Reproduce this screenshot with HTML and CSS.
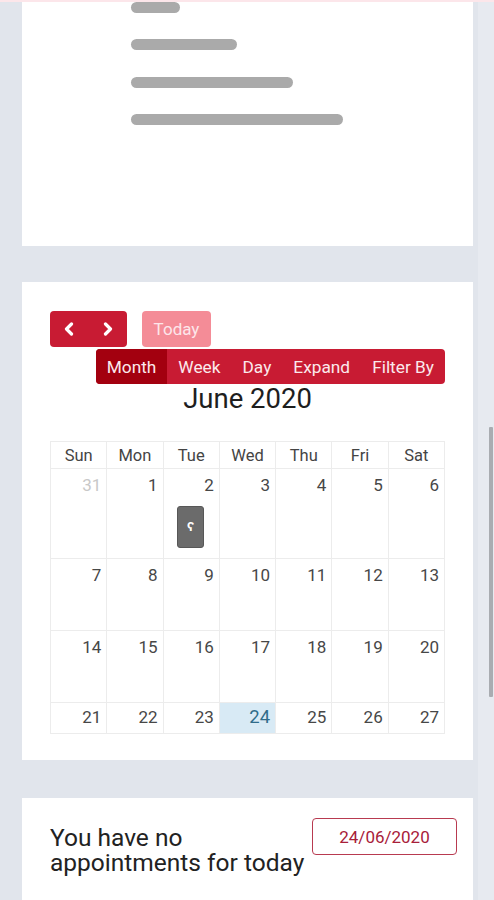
FILE: index.html
```html
<!DOCTYPE html>
<html lang="en">
<head>
<meta charset="utf-8">
<title>Calendar</title>
<link rel="stylesheet" href="styles.css">
</head>
<body>
<div class="topline"></div>
<div class="page">
  <section class="card card-top">
    <div class="skeleton">
      <span class="bar b1"></span>
      <span class="bar b2"></span>
      <span class="bar b3"></span>
      <span class="bar b4"></span>
    </div>
  </section>

  <section class="card card-cal">
    <div class="toolbar-row">
      <div class="btn-group nav-group">
        <button class="btn nav-btn" aria-label="prev">
          <svg width="10" height="14" viewBox="0 0 10 14"><polyline points="7.5,2 2.5,7 7.5,12" fill="none" stroke="#fff" stroke-width="3.2" stroke-linecap="round" stroke-linejoin="round"/></svg>
        </button>
        <button class="btn nav-btn" aria-label="next">
          <svg width="10" height="14" viewBox="0 0 10 14"><polyline points="2.5,2 7.5,7 2.5,12" fill="none" stroke="#fff" stroke-width="3.2" stroke-linecap="round" stroke-linejoin="round"/></svg>
        </button>
      </div>
      <button class="btn today-btn">Today</button>
    </div>
    <div class="view-row">
      <div class="btn-group view-group">
        <button class="btn view-btn active">Month</button>
        <button class="btn view-btn">Week</button>
        <button class="btn view-btn">Day</button>
        <button class="btn view-btn">Expand</button>
        <button class="btn view-btn">Filter By</button>
      </div>
    </div>
    <h2 class="cal-title">June 2020</h2>
    <table class="cal">
      <thead>
        <tr><th>Sun</th><th>Mon</th><th>Tue</th><th>Wed</th><th>Thu</th><th>Fri</th><th>Sat</th></tr>
      </thead>
      <tbody>
        <tr class="r1">
          <td><div class="num other">31</div></td>
          <td><div class="num">1</div></td>
          <td><div class="num">2</div><div class="event">ʕ</div></td>
          <td><div class="num">3</div></td>
          <td><div class="num">4</div></td>
          <td><div class="num">5</div></td>
          <td><div class="num">6</div></td>
        </tr>
        <tr class="r2">
          <td><div class="num">7</div></td>
          <td><div class="num">8</div></td>
          <td><div class="num">9</div></td>
          <td><div class="num">10</div></td>
          <td><div class="num">11</div></td>
          <td><div class="num">12</div></td>
          <td><div class="num">13</div></td>
        </tr>
        <tr class="r2">
          <td><div class="num">14</div></td>
          <td><div class="num">15</div></td>
          <td><div class="num">16</div></td>
          <td><div class="num">17</div></td>
          <td><div class="num">18</div></td>
          <td><div class="num">19</div></td>
          <td><div class="num">20</div></td>
        </tr>
        <tr class="r4">
          <td><div class="num">21</div></td>
          <td><div class="num">22</div></td>
          <td><div class="num">23</div></td>
          <td class="today"><div class="num">24</div></td>
          <td><div class="num">25</div></td>
          <td><div class="num">26</div></td>
          <td><div class="num">27</div></td>
        </tr>
      </tbody>
    </table>
  </section>

  <section class="card card-appt">
    <p class="appt-text">You have no appointments for today</p>
    <button class="date-btn">24/06/2020</button>
  </section>
</div>
<div class="scrollbar"><div class="thumb"></div></div>
</body>
</html>
```
FILE: styles.css
```css
* { box-sizing: border-box; }

html, body {
  margin: 0;
  padding: 0;
}

body {
  background: #e1e5ec;
  font-family: Roboto, "Liberation Sans", sans-serif;
  color: #222;
  height: 900px;
  overflow: hidden;
}

.topline {
  position: absolute;
  left: 0;
  top: 0;
  width: 100%;
  height: 2px;
  background: #fce6ea;
  z-index: 2;
}

.page {
  display: flex;
  flex-direction: column;
  padding-left: 22px;
}

.card {
  width: 451px;
  background: #fff;
}

.card-top {
  height: 246px;
  padding: 1.5px 0 0 109px;
}

.skeleton {
  display: flex;
  flex-direction: column;
  gap: 26.5px;
}

.bar {
  display: block;
  height: 11px;
  border-radius: 6px;
  background: #aaaaaa;
}
.b1 { width: 49px; }
.b2 { width: 106px; }
.b3 { width: 162px; }
.b4 { width: 212px; }

.card-cal {
  margin-top: 36px;
  padding: 29px 28px 26px 28px;
}

.toolbar-row {
  display: flex;
  gap: 15px;
  height: 36px;
}

.btn {
  border: 0;
  margin: 0;
  font-family: Roboto, "Liberation Sans", sans-serif;
  font-size: 17px;
  color: #fff;
  cursor: pointer;
  display: flex;
  align-items: center;
  justify-content: center;
}

.btn-group {
  display: flex;
  border-radius: 4px;
  overflow: hidden;
  background: #c81b33;
}

.nav-group {
  width: 77px;
  height: 36px;
}

.nav-btn {
  flex: 1;
  background: transparent;
  padding: 0;
}

.today-btn {
  width: 69px;
  height: 36px;
  border-radius: 4px;
  background: #f48c97;
  color: #fde6ea;
  padding: 0;
}

.view-row {
  display: flex;
  justify-content: flex-end;
  margin-top: 2px;
}

.view-group {
  height: 35px;
}

.view-btn {
  background: transparent;
  padding: 0 11px;
  height: 35px;
  font-size: 17.3px;
  color: #fbe9ec;
}

.view-btn.active {
  background: #a3000f;
}

.cal-title {
  margin: 0;
  text-align: center;
  font-size: 27.5px;
  font-weight: 400;
  line-height: 30px;
  color: #1e1e1e;
}

.cal {
  margin-top: 27px;
  width: 395px;
  border-collapse: collapse;
  table-layout: fixed;
}

.cal th,
.cal td {
  border: 1px solid #ececec;
  padding: 0;
}

.cal th {
  height: 27px;
  font-size: 16.5px;
  font-weight: 400;
  color: #444;
  text-align: center;
  vertical-align: middle;
}

.cal td {
  vertical-align: top;
}

.r1 td { height: 90px; }
.r2 td { height: 72px; }
.r4 td { height: 31px; }

.num {
  text-align: right;
  font-size: 17px;
  line-height: 20px;
  padding: 6px 5px 0 0;
  color: #474747;
}

.num.other { color: #c8c8c8; }

.r4 .num { padding-top: 4px; }

.today { background: #d8eaf5; }
.today .num {
  color: #2f6c8a;
  font-size: 18.5px;
}

.event {
  width: 27px;
  height: 42px;
  margin: 11px auto 0 auto;
  position: relative;
  left: -0.5px;
  background: #6b6b6b;
  border: 1px solid #575757;
  border-radius: 3px;
  color: #fff;
  font-size: 13px;
  line-height: 40px;
  text-align: center;
  font-weight: 700;
}

.card-appt {
  margin-top: 38px;
  height: 120px;
  padding: 20px 16px 0 28px;
  display: flex;
  justify-content: space-between;
  align-items: flex-start;
}

.appt-text {
  margin: 7px 0 0 0;
  width: 262px;
  font-size: 24.5px;
  line-height: 25px;
  color: #222;
}

.date-btn {
  width: 145px;
  height: 37px;
  border: 1.5px solid #b83a50;
  border-radius: 4px;
  background: #fff;
  color: #a82039;
  font-family: Roboto, "Liberation Sans", sans-serif;
  font-size: 17px;
  padding: 0;
}

.scrollbar {
  position: fixed;
  right: 0;
  top: 0;
  width: 16px;
  height: 900px;
  background: #e7eaf0;
}

.thumb {
  position: absolute;
  right: 1px;
  top: 427px;
  width: 4px;
  height: 270px;
  background: #a9acb1;
  border-radius: 1px;
}
```
